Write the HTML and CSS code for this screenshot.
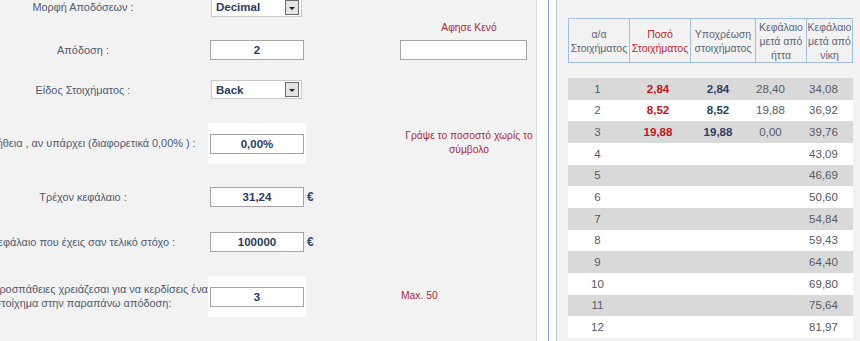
FILE: index.html
```html
<!DOCTYPE html>
<html lang="el">
<head>
  <meta charset="UTF-8" />
  <meta name="viewport" content="width=device-width, initial-scale=1.0" />
  <title>Υπολογισμός Στοιχημάτων</title>
  <link rel="stylesheet" href="styles.css">
</head>
<body>
  <div class="page">
    <div class="calc">
      <div class="lbl r1">Μορφή Αποδόσεων :</div>
      <div class="fld r1"><div class="select"><span>Decimal</span><span class="arrow"></span></div></div>

      <div class="note r1b">Αφησε Κενό</div>

      <div class="lbl r2">Απόδοση :</div>
      <div class="fld r2"><input class="inp" type="text" value="2"></div>
      <div class="note r2"><input class="inp wide" type="text" value=""></div>

      <div class="lbl r3">Είδος Στοιχήματος :</div>
      <div class="fld r3"><div class="select"><span>Back</span><span class="arrow"></span></div></div>

      <div class="lbl r4">Προμήθεια , αν υπάρχει (διαφορετικά 0,00% ) :</div>
      <div class="fld r4 white"><input class="inp" type="text" value="0,00%"></div>
      <div class="note r4">Γράψε το ποσοστό χωρίς το<br>σύμβολο</div>

      <div class="lbl r5">Τρέχον κεφάλαιο :</div>
      <div class="fld r5"><input class="inp" type="text" value="31,24"></div>
      <div class="eur r5">€</div>

      <div class="lbl r6">Κεφάλαιο που έχεις σαν τελικό στόχο :</div>
      <div class="fld r6"><input class="inp" type="text" value="100000"></div>
      <div class="eur r6">€</div>

      <div class="lbl r7">Πόσες προσπάθειες χρειάζεσαι για να κερδίσεις ένα<br>στοίχημα στην παραπάνω απόδοση:</div>
      <div class="fld r7 white"><input class="inp" type="text" value="3"></div>
      <div class="note left r7">Max. 50</div>
    </div>

    <div class="side">
      <div class="side-in">
        <div class="panel">
          <table class="head">
            <tr>
              <th>α/α<br>Στοιχήματος</th>
              <th class="red">Ποσό<br>Στοιχήματος</th>
              <th>Υποχρέωση<br>στοιχήματος</th>
              <th>Κεφάλαιο<br>μετά από<br>ήττα</th>
              <th>Κεφάλαιο<br>μετά από<br>νίκη</th>
            </tr>
          </table>

          <table class="rows">
            <tr><td>1</td><td class="stake">2,84</td><td class="liab">2,84</td><td>28,40</td><td>34,08</td></tr>
            <tr><td>2</td><td class="stake">8,52</td><td class="liab">8,52</td><td>19,88</td><td>36,92</td></tr>
            <tr><td>3</td><td class="stake">19,88</td><td class="liab">19,88</td><td>0,00</td><td>39,76</td></tr>
            <tr><td>4</td><td></td><td></td><td></td><td>43,09</td></tr>
            <tr><td>5</td><td></td><td></td><td></td><td>46,69</td></tr>
            <tr><td>6</td><td></td><td></td><td></td><td>50,60</td></tr>
            <tr><td>7</td><td></td><td></td><td></td><td>54,84</td></tr>
            <tr><td>8</td><td></td><td></td><td></td><td>59,43</td></tr>
            <tr><td>9</td><td></td><td></td><td></td><td>64,40</td></tr>
            <tr><td>10</td><td></td><td></td><td></td><td>69,80</td></tr>
            <tr><td>11</td><td></td><td></td><td></td><td>75,64</td></tr>
            <tr><td>12</td><td></td><td></td><td></td><td>81,97</td></tr>
          </table>
        </div>
      </div>
    </div>
  </div>
</body>
</html>
```

FILE: styles.css
```css
html, body {
  margin: 0;
  background: #f2f2f2;
  overflow: hidden;
}
body {
  font-family: "Liberation Sans", Arial, sans-serif;
  font-size: 10.9px;
  color: #4f5a72;
}
.page {
  display: flex;
  height: 345px;
  margin-top: -4px;
}
.calc {
  margin-left: -42px;
  width: 578px;
  flex: none;
  display: grid;
  grid-template-columns: 250px 98px 92px 138px;
  grid-template-rows: 22px 19px 26px 53px 54px 54px 36px 72px;
  align-items: center;
}
.r1 { grid-row: 1; }
.r1b { grid-row: 2; }
.r2 { grid-row: 3; }
.r3 { grid-row: 4; }
.r4 { grid-row: 5; }
.r5 { grid-row: 6; }
.r6 { grid-row: 7; }
.r7 { grid-row: 8; }
.lbl {
  grid-column: 1;
  text-align: center;
  line-height: 14px;
  white-space: nowrap;
}
.fld {
  grid-column: 2;
  padding: 0 2px;
}
.fld.white {
  background: #fff;
  padding: 11px 1px 10px 2px;
}
.eur {
  grid-column: 3;
  color: #2c4a7e;
  font-size: 12px;
  font-weight: bold;
  padding-left: 1px;
}
.note {
  grid-column: 4;
  text-align: center;
  color: #b0283a;
  font-size: 10.3px;
  line-height: 14px;
  white-space: nowrap;
  padding-left: 4px;
}
.note.left {
  text-align: left;
  padding-left: 3px;
}
.inp {
  box-sizing: border-box;
  width: 94px;
  height: 20px;
  margin: 0;
  border: 1px solid #a5a5a5;
  background: #fff;
  font-family: inherit;
  font-size: 11.5px;
  font-weight: bold;
  color: #2a3a60;
  text-align: center;
  display: block;
}
.inp.wide {
  width: 127px;
  margin-left: -2px;
}
.select {
  box-sizing: border-box;
  width: 91px;
  height: 19px;
  margin-left: 1px;
  border: 1px solid #c9c9c9;
  background: #fff;
  display: flex;
  align-items: center;
  justify-content: space-between;
  padding: 0 2px 0 4px;
  font-size: 11.5px;
  font-weight: bold;
  color: #2a3a60;
}
.arrow {
  box-sizing: border-box;
  width: 14px;
  height: 15px;
  border: 1px solid #6b6b6b;
  background: #e4e4e4;
  display: flex;
  align-items: center;
  justify-content: center;
}
.arrow::after {
  content: "";
  border-left: 3px solid transparent;
  border-right: 3px solid transparent;
  border-top: 3px solid #222;
  margin-top: 2px;
}
.side {
  flex: 1;
  border-left: 1px solid #d9d9d9;
  background: #fff;
  padding-left: 11px;
}
.side-in {
  height: 100%;
  border-left: 1px solid #7f9fd3;
  background: #fff;
  padding-left: 7px;
}
.panel {
  height: 100%;
  box-sizing: border-box;
  border-left: 1px solid #a9c2e6;
  background: #f2f2f2;
  padding: 22px 0 0 11px;
}
table {
  border-collapse: collapse;
  table-layout: fixed;
  width: 285px;
}
.head th {
  border: 1px solid #a3bfe4;
  font-weight: normal;
  font-size: 10.5px;
  line-height: 14px;
  color: #5d6578;
  height: 43px;
  padding: 0;
  text-align: center;
  white-space: nowrap;
}
.head th:nth-child(1) { width: 60px; }
.head th:nth-child(2) { width: 60px; }
.head th:nth-child(3) { width: 64px; }
.head th:nth-child(4) { width: 50px; }
.head th.red { color: #c0272d; }
.rows {
  margin-top: 15px;
}
.rows td {
  height: 21.67px;
  padding: 0;
  text-align: center;
  color: #555a66;
  font-size: 11.5px;
}
.rows tr:nth-child(odd) { background: #d9d9d9; }
.rows tr:nth-child(even) { background: #fff; }
.rows td:nth-child(1) { width: 59px; }
.rows td:nth-child(2) { width: 62px; }
.rows td:nth-child(3) { width: 58px; }
.rows td:nth-child(4) { width: 47px; }
.rows td.stake {
  color: #c0161c;
  font-weight: bold;
}
.rows td.liab {
  color: #2d3e63;
  font-weight: bold;
}
```
